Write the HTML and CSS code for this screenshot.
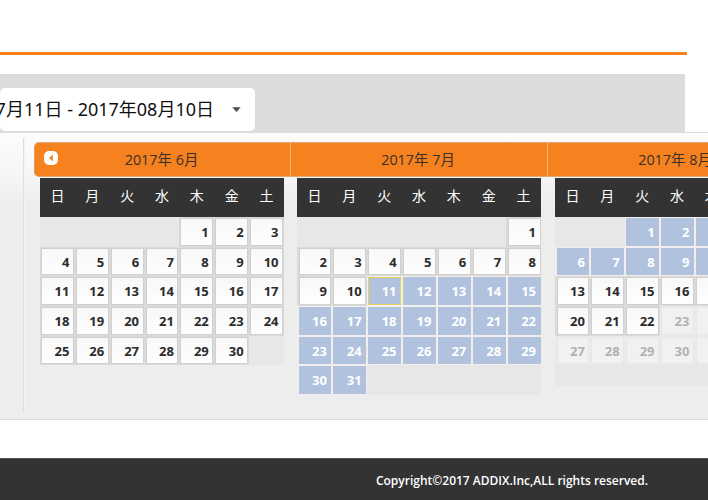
FILE: index.html
```
<!DOCTYPE html>
<html lang="ja">
<head>
<meta charset="utf-8">
<title>Calendar</title>
<link rel="stylesheet" href="styles.css">
</head>
<body>
<div class="rule"></div>
<header class="toolbar">
  <div class="range"><span>2017年07月11日 - 2017年08月10日</span>
    <svg class="caret" viewBox="0 0 10 6"><path d="M0 0.3H10L5 6Z" fill="#4c4c4c"/></svg>
  </div>
</header>
<main class="panel">
  <div class="divider"></div>
  <div class="months" id="months"></div>
</main>
<footer class="footer">Copyright©2017 ADDIX.Inc,ALL rights reserved.</footer>
<script src="calendar.js"></script>
</body>
</html>
```
FILE: styles.css
```
* { box-sizing: border-box; }
body {
  margin: 0;
  width: 708px;
  height: 500px;
  overflow: hidden;
  background: #fff;
  color: #222;
  font-family: "Open Sans", "Noto Sans CJK JP", sans-serif;
}
.rule { width: 687px; height: 3px; margin-top: 52px; background: #f5821f; }
.toolbar { width: 685px; height: 58px; margin-top: 19px; padding-top: 14px; background: #dcdcdc; }
.range {
  display: flex;
  align-items: center;
  justify-content: flex-end;
  width: 255px;
  height: 43px;
  padding-right: 14px;
  border-radius: 5px;
  background: #fff;
  color: #111;
  font-size: 18px;
  white-space: nowrap;
}
.range span { padding-bottom: 4px; font-family: "Noto Sans", "Noto Sans CJK JP", sans-serif; }
.caret { width: 9px; height: 5px; margin-left: 18px; flex: none; }
.panel {
  display: flex;
  height: 288px;
  border-top: 1px solid #dcdcdc;
  border-bottom: 1px solid #dcdcdc;
  background: linear-gradient(#fcfcfc 0, #f7f7f7 35px, #ededed 75px);
  overflow: hidden;
}
.divider { flex: none; width: 2px; height: 274px; margin: 5px 9px 0 23px; border-left: 1px solid #dfdfdf; border-right: 1px solid #f3f3f3; }
.months { display: flex; flex: none; margin-top: 9px; }
.month { width: 257px; flex: none; }
.month:first-child { width: 256px; }
.title {
  display: flex;
  height: 35px;
  padding: 0 9px;
  border: 1px solid #e0a878;
  border-left-color: #f3b580;
  border-right: 0;
  background: #f5821f;
  color: #3b3028;
  font-size: 14.4px;
  line-height: 33px;
}
.month:first-child .title { border-radius: 5px 0 0 5px; border-left-color: #d8a070; }
.title span { flex: 1; padding-right: 2px; text-align: center; }
.prev { flex: none; width: 14px; height: 14px; margin: 8px -14px 0 0; }
.week, .days { display: grid; grid-template-columns: repeat(7, 1fr); width: 244px; margin-left: 6px; }
.month + .month .week, .month + .month .days { margin-left: 7px; }
.month:nth-child(3) .week, .month:nth-child(3) .days { margin-left: 8px; }
.week { height: 40px; padding-top: 1px; background: #333 content-box; color: #fff; font-size: 14px; line-height: 36px; text-align: center; }
.days { grid-auto-rows: 29.7px; background: #e7e7e7; }
.month:nth-child(3) .days { padding-bottom: 21px; }
.slot { padding: 1px; }
.day {
  display: block;
  height: 100%;
  padding-right: 3.5px;
  border: 1px solid #d0d0d0;
  background: linear-gradient(#f8f8f8, #fefefe);
  color: #2b2b2b;
  font-size: 13px;
  font-weight: 700;
  line-height: 26px;
  text-align: right;
}
.month + .month .slot { padding-left: 1.6px; padding-right: 0.5px; }
.slot.plain { background: #dadada; }
.slot.on { background: #f0efee; }
.slot.on .day { border-color: #b5c3da; background: #b0c2de; color: #fff; }
.slot.on.start .day { border-color: #e6d354; }
.slot.off { background: #ebebeb; }
.slot.off .day { border-color: #e6e6e6; background: #f1f1f1; color: #b2b2b2; }
.footer {
  height: 42px;
  margin-top: 38px;
  padding-right: 60px;
  border-top: 1px solid #505050;
  background: #333;
  color: #fff;
  font-size: 12px;
  font-weight: 600;
  line-height: 44px;
  text-align: right;
}
```
FILE: calendar.js
```
const months = [
  { name: "2017年 6月", first: 4, count: 30, rows: 5 },
  { name: "2017年 7月", first: 6, count: 31, rows: 6, on: [11, 31], start: 11 },
  { name: "2017年 8月", first: 2, count: 31, rows: 5, on: [1, 10], off: 23 }
];
const arrow = '<svg class="prev" viewBox="0 0 14 14"><rect width="14" height="14" rx="5" fill="#fff"/><path d="M8.8 3.5V10.5L5 7Z" fill="#f5821f"/></svg>';

document.getElementById("months").innerHTML = months.map((m, i) => {
  const week = [..."日月火水木金土"].map(d => `<span>${d}</span>`).join("");
  let cells = "";
  for (let n = 0; n < m.rows * 7; n++) {
    const d = n - m.first + 1;
    if (d < 1 || d > m.count) {
      cells += "<div></div>";
      continue;
    }
    const kind = m.on && d >= m.on[0] && d <= m.on[1] ? "on" : m.off && d >= m.off ? "off" : "plain";
    cells += `<div class="slot ${kind}${m.start === d ? " start" : ""}"><span class="day">${d}</span></div>`;
  }
  return `<section class="month"><div class="title">${i === 0 ? arrow : ""}<span>${m.name}</span></div><div class="week">${week}</div><div class="days">${cells}</div></section>`;
}).join("");
```
